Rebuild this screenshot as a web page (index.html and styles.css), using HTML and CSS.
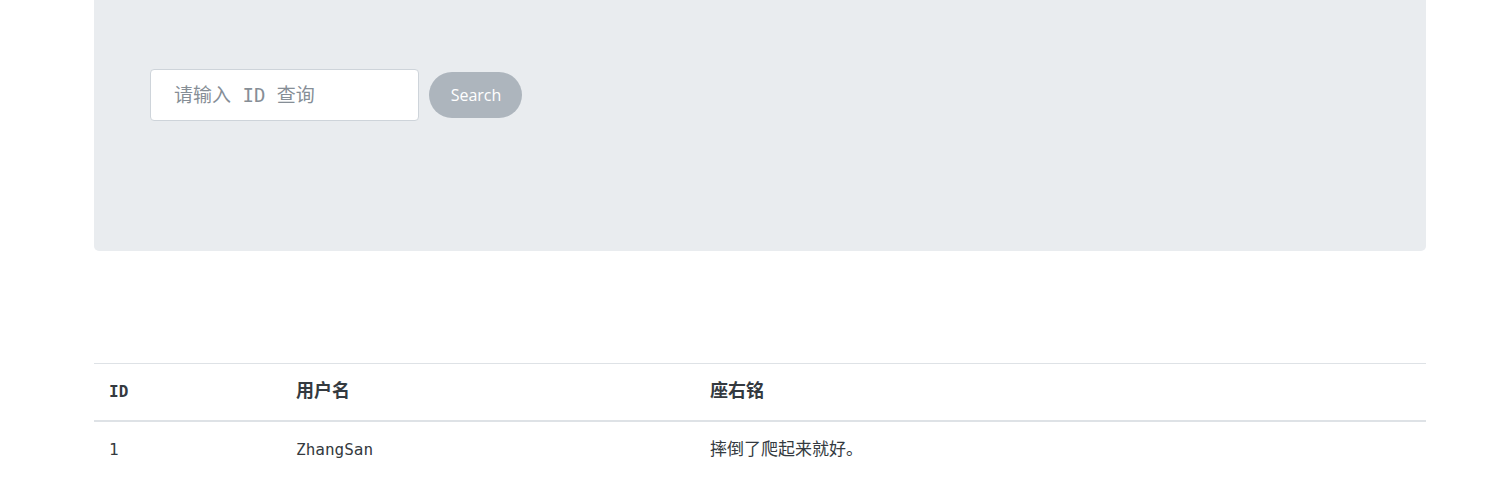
FILE: index.html
```html
<!DOCTYPE html>
<html lang="zh">
<head>
<meta charset="utf-8">
<title>查询</title>
<link rel="stylesheet" href="styles.css">
</head>
<body>
<div class="page">
  <div class="panel">
    <form class="search-form">
      <input class="search-input" type="text" placeholder="请输入 ID 查询">
      <button class="search-btn" type="button">Search</button>
    </form>
  </div>
  <table class="data-table">
    <thead>
      <tr>
        <th class="col-id">ID</th>
        <th class="col-name">用户名</th>
        <th class="col-motto">座右铭</th>
      </tr>
    </thead>
    <tbody>
      <tr>
        <td class="mono">1</td>
        <td class="mono">ZhangSan</td>
        <td class="cjk">摔倒了爬起来就好。</td>
      </tr>
    </tbody>
  </table>
</div>
</body>
</html>
```
FILE: styles.css
```css
* { box-sizing: border-box; }
html, body { margin: 0; padding: 0; background: #fff; }
body {
  font-family: "Noto Sans CJK SC", sans-serif;
  color: #212529;
}
.page {
  padding: 0 66px 0 94px;
}
.panel {
  background: #e9ecef;
  height: 251px;
  border-radius: 0 0 5px 5px;
  padding: 69px 56px 0;
}
.search-form {
  display: flex;
  align-items: center;
  gap: 10px;
}
.search-input {
  width: 269px;
  height: 52px;
  border: 1px solid #ced4da;
  border-radius: 4px;
  background: #fff;
  padding: 0 23px;
  font-family: "DejaVu Sans Mono", "Noto Sans CJK SC", monospace;
  font-size: 19px;
  color: #495057;
  outline: none;
}
.search-input::placeholder {
  color: #868e96;
}
.search-btn {
  width: 93px;
  height: 46px;
  border: none;
  border-radius: 23px;
  background: #adb5bd;
  color: #fff;
  font-family: "Open Sans", sans-serif;
  font-size: 16px;
  padding: 0 0 0 1px;
}
.data-table {
  margin-top: 112px;
  width: 100%;
  border-collapse: collapse;
}
.data-table th,
.data-table td {
  text-align: left;
  padding: 0 15px;
  vertical-align: middle;
}
.data-table th {
  height: 57px;
  border-top: 1px solid #dee2e6;
  border-bottom: 2px solid #dee2e6;
  font-weight: bold;
  font-size: 18px;
  color: #343a40;
}
.data-table th.col-name,
.data-table th.col-motto {
  padding-bottom: 6px;
}
.data-table td {
  height: 57px;
  font-size: 16px;
  color: #343a40;
}
.data-table th.col-id {
  width: 187px;
  font-family: "DejaVu Sans Mono", monospace;
  font-size: 16px;
}
.col-name { width: 414px; }
.mono { font-family: "DejaVu Sans Mono", monospace; }
.data-table td.cjk {
  font-family: "Noto Sans CJK SC", sans-serif;
  font-size: 17px;
  padding-bottom: 4px;
}
```
